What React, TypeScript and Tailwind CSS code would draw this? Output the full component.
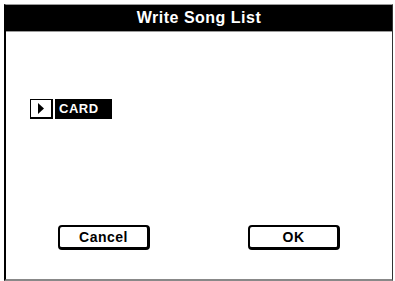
export default function App() {
  const font = { fontFamily: '"Liberation Sans", Arial, sans-serif' };
  return (
    <div className="w-[395px] h-[281px] bg-white pt-[4px] pl-[4px]" style={font}>
      <div className="flex h-[277px] w-[389px] flex-col border-t border-l-2 border-r border-b-2 border-t-[#9a9a9a] border-l-black border-r-[#333] border-b-[#888]">
        <div className="flex h-[27px] items-center justify-center border-b border-b-[#9a9a9a] bg-black">
          <span className="text-[16px] font-bold tracking-[0.5px] text-white">
            Write Song List
          </span>
        </div>

        <div className="mt-[67px] flex items-center pl-[24px]">
          <div className="flex h-[20px] w-[23px] items-center justify-center border border-r-2 border-b-2 border-black bg-white">
            <svg width="8" height="11" viewBox="0 0 8 11">
              <path d="M1 0 L7 5.5 L1 11 Z" fill="#000" />
            </svg>
          </div>
          <div className="ml-[2px] flex h-[20px] w-[57px] items-center bg-black pl-[4px]">
            <span className="text-[13px] font-bold tracking-[0.5px] text-white">CARD</span>
          </div>
        </div>

        <div className="mt-auto mb-[29px] flex pl-[52px]">
          <button className="flex h-[25px] w-[92px] items-center justify-center rounded-[4px] border-2 border-r-[3px] border-b-[3px] border-black bg-white text-[14px] font-bold tracking-[0.5px] text-black">
            Cancel
          </button>
          <button className="ml-[98px] flex h-[25px] w-[92px] items-center justify-center rounded-[4px] border-2 border-r-[3px] border-b-[3px] border-black bg-white text-[14px] font-bold tracking-[0.5px] text-black">
            OK
          </button>
        </div>
      </div>
    </div>
  );
}
